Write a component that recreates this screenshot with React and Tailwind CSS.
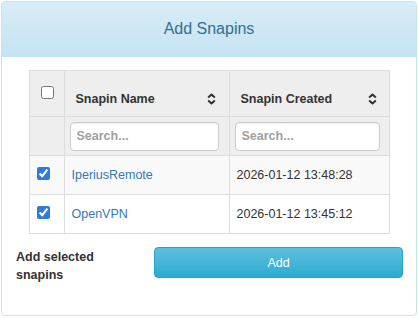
import React from "react";

// FA-style sort caret pair
function SortIcon() {
  return (
    <svg width="9" height="12" viewBox="0 0 9 12" className="shrink-0">
      <polyline points="1.2,4.6 4.5,1.5 7.8,4.6" fill="none" stroke="#333" strokeWidth="2" strokeLinejoin="round" />
      <polyline points="1.2,7.4 4.5,10.5 7.8,7.4" fill="none" stroke="#333" strokeWidth="2" strokeLinejoin="round" />
    </svg>
  );
}

const snapins = [
  { name: "IperiusRemote", created: "2026-01-12 13:48:28" },
  { name: "OpenVPN", created: "2026-01-12 13:45:12" },
];

export default function App() {
  return (
    <div className="w-[418px] h-[318px] bg-white p-px font-['Liberation_Sans',Arial,sans-serif] text-[12.5px] leading-[18px] text-[#333]">
      <div className="w-[416px] h-[315px] border border-[#bce8f1] rounded-[4px] overflow-hidden">
        {/* Heading */}
        <div className="h-[55px] bg-gradient-to-b from-[#d9edf7] to-[#c4e3f3] border-b border-[#bce8f1] flex items-center justify-center text-[16px] text-[#31708f]">
          Add Snapins
        </div>

        {/* Body */}
        <div className="pt-[13px]">
          <table className="mx-auto w-[360px] border-collapse table-fixed">
            <colgroup>
              <col className="w-[35px]" />
              <col className="w-[165px]" />
              <col className="w-[160px]" />
            </colgroup>
            <thead>
              <tr className="h-[46px] bg-[#eeeeee]">
                <th className="border border-[#dddddd] pl-[11px] align-middle text-left">
                  <input type="checkbox" className="block w-[13px] h-[13px] mt-[-2px]" />
                </th>
                <th className="border border-[#dddddd] pl-[11px] pr-[13px] pb-[8px] align-bottom text-left font-bold">
                  <div className="flex items-center justify-between">
                    <span>Snapin Name</span>
                    <SortIcon />
                  </div>
                </th>
                <th className="border border-[#dddddd] pl-[11px] pr-[12px] pb-[8px] align-bottom text-left font-bold">
                  <div className="flex items-center justify-between">
                    <span>Snapin Created</span>
                    <SortIcon />
                  </div>
                </th>
              </tr>
              <tr className="h-[39px] bg-[#eeeeee]">
                <td className="border border-[#dddddd]"></td>
                <td className="border border-[#dddddd] pl-[5px]">
                  <input
                    placeholder="Search..."
                    className="block w-[149px] h-[29px] px-[6px] bg-white border border-[#cccccc] rounded-[4px] shadow-[inset_0_1px_1px_rgba(0,0,0,0.075)] font-bold text-[#555] placeholder:text-[#a0a0a0] outline-none"
                  />
                </td>
                <td className="border border-[#dddddd] pl-[5px]">
                  <input
                    placeholder="Search..."
                    className="block w-[145px] h-[29px] px-[6px] bg-white border border-[#cccccc] rounded-[4px] shadow-[inset_0_1px_1px_rgba(0,0,0,0.075)] font-bold text-[#555] placeholder:text-[#a0a0a0] outline-none"
                  />
                </td>
              </tr>
            </thead>
            <tbody>
              {snapins.map((s, i) => (
                <tr key={s.name} className={i % 2 === 0 ? "h-[39px] bg-[#f9f9f9]" : "h-[39px] bg-white"}>
                  <td className="border border-[#dddddd] pl-[7px] align-middle">
                    <input type="checkbox" defaultChecked className="block w-[13px] h-[13px] mt-[-3px] accent-[#2f7bd9]" />
                  </td>
                  <td className="border border-[#dddddd] pl-[7px] align-middle">
                    <a href="#" className="text-[#337ab7]">{s.name}</a>
                  </td>
                  <td className="border border-[#dddddd] pl-[7px] align-middle">{s.created}</td>
                </tr>
              ))}
            </tbody>
          </table>

          {/* Footer action */}
          <div className="flex items-start mt-[13px] pl-[14px]">
            <div className="w-[138px] pt-px font-bold">
              Add selected
              <br />
              snapins
            </div>
            <button className="w-[249px] h-[31px] rounded-[4px] border border-[#28a4c9] bg-gradient-to-b from-[#5bc0de] to-[#2aabd2] text-white">
              Add
            </button>
          </div>
        </div>
      </div>
    </div>
  );
}
